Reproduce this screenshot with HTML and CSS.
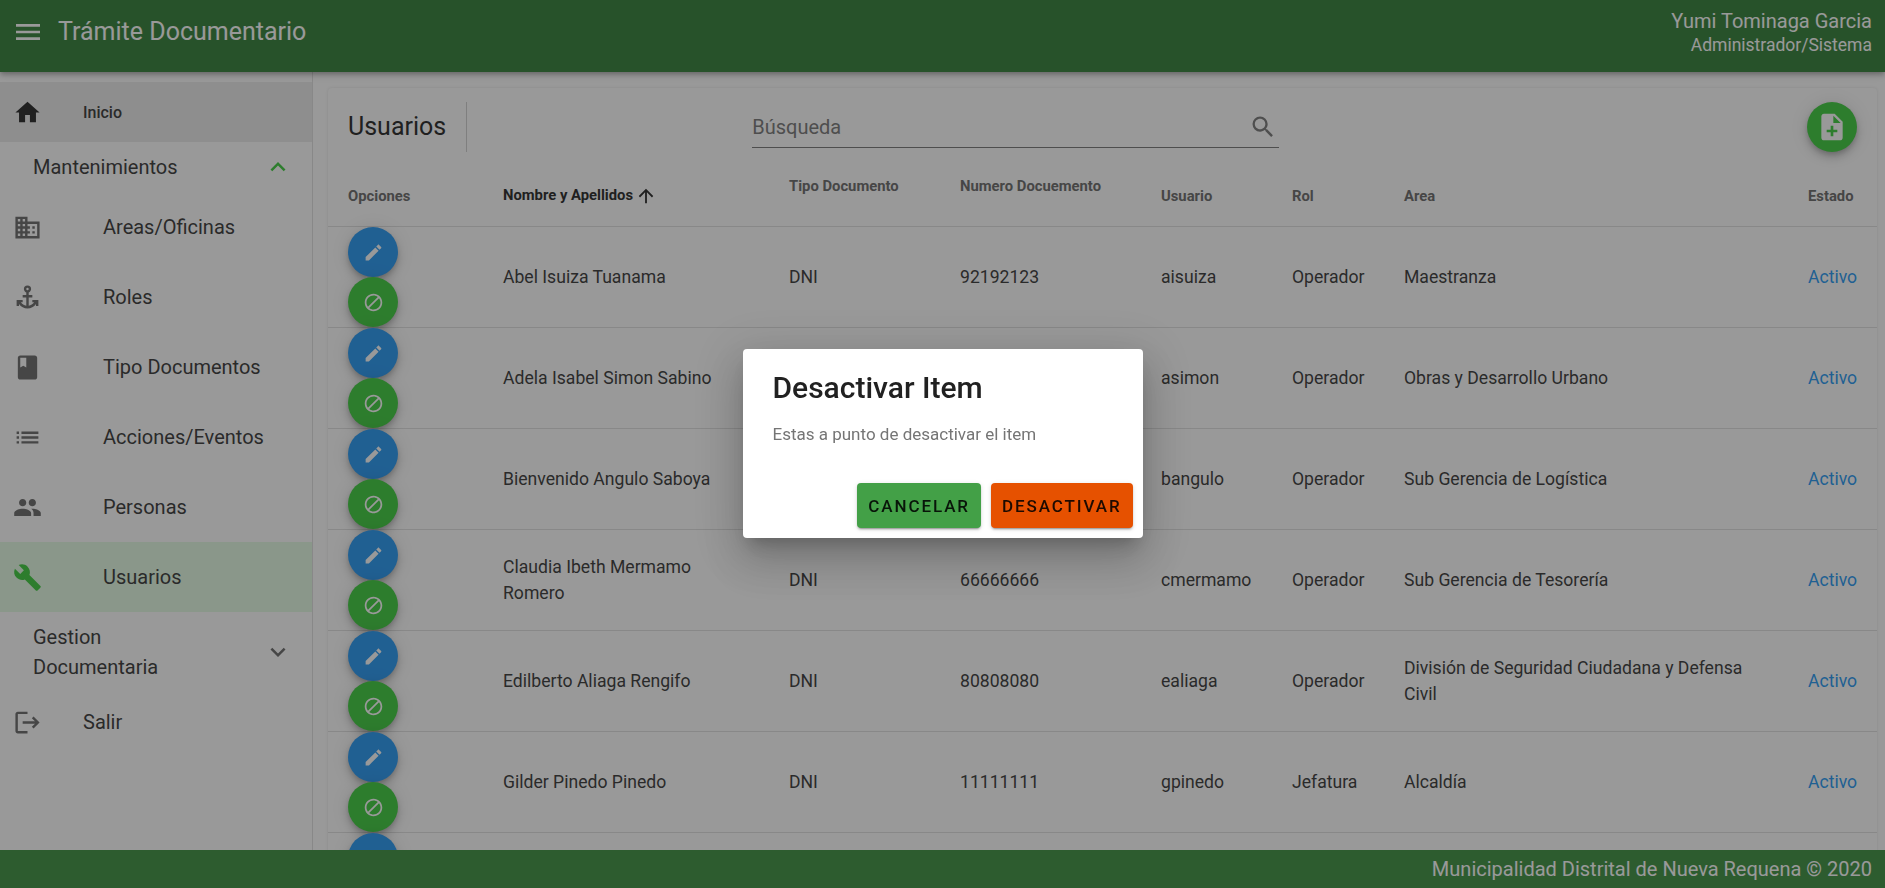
FILE: index.html
```html
<!DOCTYPE html>
<html>
    <head>
        <meta charset="utf-8" />
        <title>Trámite Documentario</title>
        <link rel="stylesheet" href="styles.css">
    </head>

    <body>
        <header class="topbar">
            <svg class="icon icon-menu" viewBox="0 0 24 24"><path d="M3,6H21V8H3V6M3,11H21V13H3V11M3,16H21V18H3V16Z"/></svg>
            <span class="topbar-title">Trámite Documentario</span>
            <div class="topbar-user">
                <span class="user-name">Yumi Tominaga Garcia</span>
                <span class="user-role">Administrador/Sistema</span>
            </div>
        </header>

        <div class="layout">
            <aside class="sidebar">
                <a class="nav-top nav-home">
                    <svg class="icon nav-icon icon-dark" viewBox="0 0 24 24"><path d="M10,20V14H14V20H19V12H22L12,3L2,12H5V20H10Z"/></svg>
                    <span class="nav-home-label">Inicio</span>
                </a>
                <div class="nav-group nav-group-open">
                    <span>Mantenimientos</span>
                    <svg class="icon chevron chevron-green" viewBox="0 0 24 24"><path d="M7.41,15.41L12,10.83L16.59,15.41L18,14L12,8L6,14L7.41,15.41Z"/></svg>
                </div>
                <a class="nav-item">
                    <svg class="icon nav-icon" viewBox="0 0 24 24"><path d="M18,15H16V17H18M18,11H16V13H18M20,19H12V17H14V15H12V13H14V11H12V9H20M10,7H8V5H10M10,11H8V9H10M10,15H8V13H10M10,19H8V17H10M6,7H4V5H6M6,11H4V9H6M6,15H4V13H6M6,19H4V17H6M12,7V3H2V21H22V7H12Z"/></svg>
                    <span>Areas/Oficinas</span>
                </a>
                <a class="nav-item">
                    <svg class="icon nav-icon" viewBox="0 0 24 24"><path d="M12,2A3,3 0 0,0 9,5C9,6.27 9.8,7.4 11,7.83V10H8V12H11V18.92C9.16,18.63 7.53,17.57 6.53,16H8V14H3V19H5V17.3C6.58,19.61 9.2,21 12,21C14.8,21 17.42,19.61 19,17.3V19H21V14H16V16H17.46C16.46,17.57 14.83,18.63 13,18.92V12H16V10H13V7.82C14.2,7.4 15,6.27 15,5A3,3 0 0,0 12,2M12,4A1,1 0 0,1 13,5A1,1 0 0,1 12,6A1,1 0 0,1 11,5A1,1 0 0,1 12,4Z"/></svg>
                    <span>Roles</span>
                </a>
                <a class="nav-item">
                    <svg class="icon nav-icon" viewBox="0 0 24 24"><path d="M18 2H6c-1.1 0-2 .9-2 2v16c0 1.1.9 2 2 2h12c1.1 0 2-.9 2-2V4c0-1.1-.9-2-2-2zM6 4h5v8l-2.5-1.5L6 12V4z"/></svg>
                    <span>Tipo Documentos</span>
                </a>
                <a class="nav-item">
                    <svg class="icon nav-icon" viewBox="0 0 24 24"><path d="M3 13h2v-2H3v2zm0 4h2v-2H3v2zm0-8h2V7H3v2zm4 4h14v-2H7v2zm0 4h14v-2H7v2zM7 7v2h14V7H7z"/></svg>
                    <span>Acciones/Eventos</span>
                </a>
                <a class="nav-item">
                    <svg class="icon nav-icon" viewBox="0 0 24 24"><path d="M16 11c1.66 0 2.99-1.34 2.99-3S17.66 5 16 5c-1.66 0-3 1.34-3 3s1.34 3 3 3zm-8 0c1.66 0 2.99-1.34 2.99-3S9.66 5 8 5C6.34 5 5 6.34 5 8s1.34 3 3 3zm0 2c-2.33 0-7 1.17-7 3.5V19h14v-2.5c0-2.33-4.67-3.5-7-3.5zm8 0c-.29 0-.62.02-.97.05 1.16.84 1.97 1.97 1.97 3.45V19h6v-2.5c0-2.33-4.67-3.5-7-3.5z"/></svg>
                    <span>Personas</span>
                </a>
                <a class="nav-item nav-item-active">
                    <svg class="icon nav-icon" viewBox="0 0 24 24"><path d="M22.7,19L13.6,9.9C14.5,7.6 14,4.9 12.1,3C10.1,1 7.1,0.6 4.7,1.7L9,6L6,9L1.6,4.7C0.4,7.1 0.9,10.1 2.9,12.1C4.8,14 7.5,14.5 9.8,13.6L18.9,22.7C19.3,23.1 19.9,23.1 20.3,22.7L22.6,20.4C23.1,20 23.1,19.3 22.7,19Z"/></svg>
                    <span>Usuarios</span>
                </a>
                <div class="nav-group nav-group-tall">
                    <span>Gestion<br>Documentaria</span>
                    <svg class="icon chevron" viewBox="0 0 24 24"><path d="M7.41,8.58L12,13.17L16.59,8.58L18,10L12,16L6,10L7.41,8.58Z"/></svg>
                </div>
                <a class="nav-top">
                    <svg class="icon nav-icon" viewBox="0 0 24 24"><path d="M17 7L15.59 8.41L18.17 11H8V13H18.17L15.59 15.58L17 17L22 12M4 5H12V3H4C2.9 3 2 3.9 2 5V19C2 20.1 2.9 21 4 21H12V19H4V5Z"/></svg>
                    <span>Salir</span>
                </a>
            </aside>

            <main class="content">
                <section class="card">
                    <div class="toolbar">
                        <h1 class="toolbar-title">Usuarios</h1>
                        <div class="toolbar-divider"></div>
                        <div class="search">
                            <span class="search-label">Búsqueda</span>
                            <svg class="icon icon-search" viewBox="0 0 24 24"><path d="M15.5,14H14.71L14.43,13.73C15.41,12.59 16,11.11 16,9.5A6.5,6.5 0 0,0 9.5,3A6.5,6.5 0 0,0 3,9.5A6.5,6.5 0 0,0 9.5,16C11.11,16 12.59,15.41 13.73,14.43L14,14.71V15.5L19,20.5L20.5,19L15.5,14M9.5,14C7,14 5,12 5,9.5C5,7 7,5 9.5,5C12,5 14,7 14,9.5C14,12 12,14 9.5,14Z"/></svg>
                        </div>
                        <button class="fab fab-green fab-add">
                            <svg class="icon icon-add" viewBox="0 0 24 24"><path d="M14 2H6c-1.1 0-1.99.9-1.99 2L4 20c0 1.1.89 2 1.99 2H18c1.1 0 2-.9 2-2V8l-6-6zm2 14h-3v3h-2v-3H8v-2h3v-3h2v3h3v2zm-3-7V3.5L18.5 9H13z"/></svg>
                        </button>
                    </div>

                    <table class="users">
                        <thead>
                            <tr>
                                <th>Opciones</th>
                                <th class="th-sorted">Nombre y Apellidos <svg class="icon icon-sort" viewBox="0 0 24 24"><path d="M13,20H11V8L5.5,13.5L4.08,12.08L12,4.16L19.92,12.08L18.5,13.5L13,8V20Z"/></svg></th>
                                <th class="th-raised">Tipo Documento</th>
                                <th class="th-raised">Numero Docuemento</th>
                                <th>Usuario</th>
                                <th>Rol</th>
                                <th>Area</th>
                                <th>Estado</th>
                            </tr>
                        </thead>
                        <tbody id="rows"></tbody>
                    </table>
                </section>
            </main>
        </div>

        <footer class="bottombar">Municipalidad Distrital de Nueva Requena © 2020</footer>

        <div class="overlay">
            <div class="dialog">
                <h2 class="dialog-title">Desactivar Item</h2>
                <p class="dialog-text">Estas a punto de desactivar el item</p>
                <div class="dialog-actions">
                    <button class="btn btn-cancel">Cancelar</button>
                    <button class="btn btn-confirm">Desactivar</button>
                </div>
            </div>
        </div>

        <script>
            const users = [
                ["Abel Isuiza Tuanama", "DNI", "92192123", "aisuiza", "Operador", "Maestranza", "Activo"],
                ["Adela Isabel Simon Sabino", "DNI", "", "asimon", "Operador", "Obras y Desarrollo Urbano", "Activo"],
                ["Bienvenido Angulo Saboya", "DNI", "", "bangulo", "Operador", "Sub Gerencia de Logística", "Activo"],
                ["Claudia Ibeth Mermamo<br>Romero", "DNI", "66666666", "cmermamo", "Operador", "Sub Gerencia de Tesorería", "Activo"],
                ["Edilberto Aliaga Rengifo", "DNI", "80808080", "ealiaga", "Operador", "División de Seguridad Ciudadana y Defensa<br>Civil", "Activo"],
                ["Gilder Pinedo Pinedo", "DNI", "11111111", "gpinedo", "Jefatura", "Alcaldía", "Activo"],
                ["", "", "", "", "", "", ""],
            ];
            const editIcon = '<svg class="icon icon-fab" viewBox="0 0 24 24"><path d="M20.71,7.04C21.1,6.65 21.1,6 20.71,5.63L18.37,3.29C18,2.9 17.35,2.9 16.96,3.29L15.12,5.12L18.87,8.87M3,17.25V21H6.75L17.81,9.93L14.06,6.18L3,17.25Z"/></svg>';
            const blockIcon = '<svg class="icon icon-fab icon-mirror" viewBox="0 0 24 24"><path d="M12 2C17.5 2 22 6.5 22 12S17.5 22 12 22 2 17.5 2 12 6.5 2 12 2M12 4C10.1 4 8.4 4.6 7.1 5.7L18.3 16.9C19.3 15.5 20 13.8 20 12C20 7.6 16.4 4 12 4M16.9 18.3L5.7 7.1C4.6 8.4 4 10.1 4 12C4 16.4 7.6 20 12 20C13.9 20 15.6 19.4 16.9 18.3Z"/></svg>';

            document.getElementById("rows").innerHTML = users
                .map((user) => {
                    const cells = user.map((text) => `<td>${text}</td>`).join("");
                    const state = cells.replace(/<td>Activo<\/td>/, '<td class="state">Activo</td>');
                    return `<tr><td class="options"><button class="fab fab-blue">${editIcon}</button><button class="fab fab-green">${blockIcon}</button></td>${state}</tr>`;
                })
                .join("");
        </script>
    </body>
</html>
```

FILE: styles.css
```css
* {
    box-sizing: border-box;
}

html,
body {
    height: 100%;
}

body {
    margin: 0;
    display: flex;
    flex-direction: column;
    overflow: hidden;
    font-family: Roboto, "Liberation Sans", sans-serif;
    color: #212121;
    background: #fff;
}

.icon {
    display: block;
    flex: none;
    fill: currentColor;
}

/* top bar */

.topbar {
    position: relative;
    z-index: 2;
    flex: none;
    height: 72px;
    display: flex;
    align-items: flex-start;
    padding: 0 13px 0 12px;
    color: #fff;
    background: #2e7d32;
    box-shadow: 0 2px 4px -1px rgba(0, 0, 0, 0.2), 0 4px 5px rgba(0, 0, 0, 0.14), 0 1px 10px rgba(0, 0, 0, 0.12);
}

.icon-menu {
    width: 32px;
    height: 32px;
    margin-top: 16px;
}

.topbar-title {
    margin: 16px 0 0 14px;
    font-size: 25px;
    line-height: 32px;
}

.topbar-user {
    margin-left: auto;
    margin-top: 9px;
    display: flex;
    flex-direction: column;
    align-items: flex-end;
}

.user-name {
    font-size: 20px;
    line-height: 24px;
}

.user-role {
    font-size: 17.5px;
    line-height: 24px;
}

/* sidebar */

.layout {
    flex: 1;
    min-height: 0;
    display: flex;
}

.sidebar {
    flex: none;
    width: 313px;
    padding-top: 10px;
    border-right: 1px solid #e0e0e0;
    font-size: 20px;
    color: #333;
}

.nav-top,
.nav-item {
    display: flex;
    align-items: center;
}

.nav-top {
    height: 60px;
}

.nav-home {
    background: #ebebeb;
}

.nav-home-label {
    font-size: 16px;
    font-weight: 500;
}

.nav-item {
    height: 70px;
}

.nav-item span {
    margin-left: 20px;
}

.nav-item-active {
    background: #e3fbe3;
}

.nav-item-active .nav-icon {
    color: #39cb39;
}

.nav-icon {
    width: 29px;
    height: 29px;
    margin: 0 41px 0 13px;
    color: #666;
}

.icon-dark {
    color: #212121;
}

.nav-group {
    display: flex;
    align-items: center;
    justify-content: space-between;
    padding: 0 19px 0 33px;
    line-height: 30px;
}

.nav-group-open {
    height: 50px;
}

.nav-group-tall {
    height: 80px;
}

.chevron {
    width: 30px;
    height: 30px;
    color: #666;
}

.chevron-green {
    color: #39cb39;
}

/* content */

.content {
    flex: 1;
    min-width: 0;
    padding: 16px 8px 0 15px;
    overflow: hidden;
}

.card {
    background: #fff;
    border-radius: 4px 4px 0 0;
    box-shadow: 0 0 3px rgba(0, 0, 0, 0.12);
}

.toolbar {
    height: 87px;
    display: flex;
    align-items: flex-start;
    padding: 14px 20px 0;
}

.toolbar-title {
    margin: 0;
    font-size: 25px;
    font-weight: 400;
    line-height: 50px;
}

.toolbar-divider {
    width: 1px;
    height: 50px;
    margin-left: 20px;
    background: #d0d0d0;
}

.search {
    width: 527px;
    height: 46px;
    margin-left: 285px;
    display: flex;
    align-items: center;
    justify-content: space-between;
    padding-top: 4px;
    border-bottom: 1px solid #757575;
    color: #757575;
    font-size: 20px;
}

.icon-search {
    width: 28px;
    height: 28px;
    margin-right: 2px;
}

.fab {
    display: flex;
    align-items: center;
    justify-content: center;
    width: 50px;
    height: 50px;
    padding: 0;
    border: 0;
    border-radius: 50%;
    color: #fff;
    box-shadow: 0 3px 5px -1px rgba(0, 0, 0, 0.2), 0 6px 10px rgba(0, 0, 0, 0.14), 0 1px 18px rgba(0, 0, 0, 0.12);
}

.fab-add {
    margin-left: auto;
}

.fab-green {
    background: #39cb39;
}

.fab-blue {
    background: #2196f3;
}

.icon-add {
    width: 32px;
    height: 32px;
}

.icon-fab {
    width: 21px;
    height: 21px;
}

.icon-mirror {
    transform: scaleX(-1);
}

/* table */

.users {
    width: 1549px;
    table-layout: fixed;
    border-collapse: separate;
    border-spacing: 0;
}

.users th:nth-child(1) { width: 159px; }
.users th:nth-child(2) { width: 286px; }
.users th:nth-child(3) { width: 171px; }
.users th:nth-child(4) { width: 201px; }
.users th:nth-child(5) { width: 131px; }
.users th:nth-child(6) { width: 112px; }
.users th:nth-child(7) { width: 404px; }
.users th:nth-child(8) { width: 85px; }

.users th,
.users td {
    padding: 0 16px;
    border-bottom: 1px solid #e0e0e0;
    text-align: left;
}

.users th:first-child,
.users td:first-child {
    padding-left: 20px;
}

.users th {
    height: 52px;
    padding-bottom: 10px;
    font-size: 14.8px;
    font-weight: 700;
    color: #666;
}

.users th.th-raised {
    padding-bottom: 30px;
}

.users th.th-sorted {
    color: #212121;
}

.icon-sort {
    display: inline-block;
    vertical-align: middle;
    width: 22px;
    height: 22px;
    margin-left: -2px;
}

.users td {
    height: 101px;
    font-size: 17.6px;
    line-height: 26px;
    color: #333;
}

.users td.state {
    color: #2196f3;
}

/* footer */

.bottombar {
    position: relative;
    z-index: 2;
    flex: none;
    height: 38px;
    padding-right: 13px;
    background: #388e3c;
    color: #fff;
    font-size: 20px;
    line-height: 38px;
    text-align: right;
}

/* dialog */

.overlay {
    position: fixed;
    inset: 0;
    z-index: 5;
    display: flex;
    align-items: center;
    justify-content: center;
    background: rgba(33, 33, 33, 0.46);
}

.dialog {
    width: 400px;
    height: 189px;
    margin-bottom: 1px;
    padding: 23px 10px 10px 30px;
    border-radius: 4px;
    background: #fff;
    box-shadow: 0 11px 15px -7px rgba(0, 0, 0, 0.2), 0 24px 38px 3px rgba(0, 0, 0, 0.14), 0 9px 46px 8px rgba(0, 0, 0, 0.12);
}

.dialog-title {
    margin: 0;
    font-size: 30px;
    font-weight: 500;
    line-height: 32px;
}

.dialog-text {
    margin: 18px 0 0;
    font-size: 17px;
    line-height: 24px;
    color: #757575;
}

.dialog-actions {
    display: flex;
    justify-content: flex-end;
    gap: 10px;
    margin-top: 37px;
}

.btn {
    height: 45px;
    padding: 0 11px;
    border: 0;
    border-radius: 4px;
    font-family: inherit;
    font-size: 17px;
    font-weight: 500;
    letter-spacing: 1.9px;
    text-transform: uppercase;
    color: rgba(0, 0, 0, 0.87);
    box-shadow: 0 3px 1px -2px rgba(0, 0, 0, 0.2), 0 2px 2px rgba(0, 0, 0, 0.14), 0 1px 5px rgba(0, 0, 0, 0.12);
}

.btn-cancel {
    background: #43a047;
}

.btn-confirm {
    background: #e65100;
}
```
